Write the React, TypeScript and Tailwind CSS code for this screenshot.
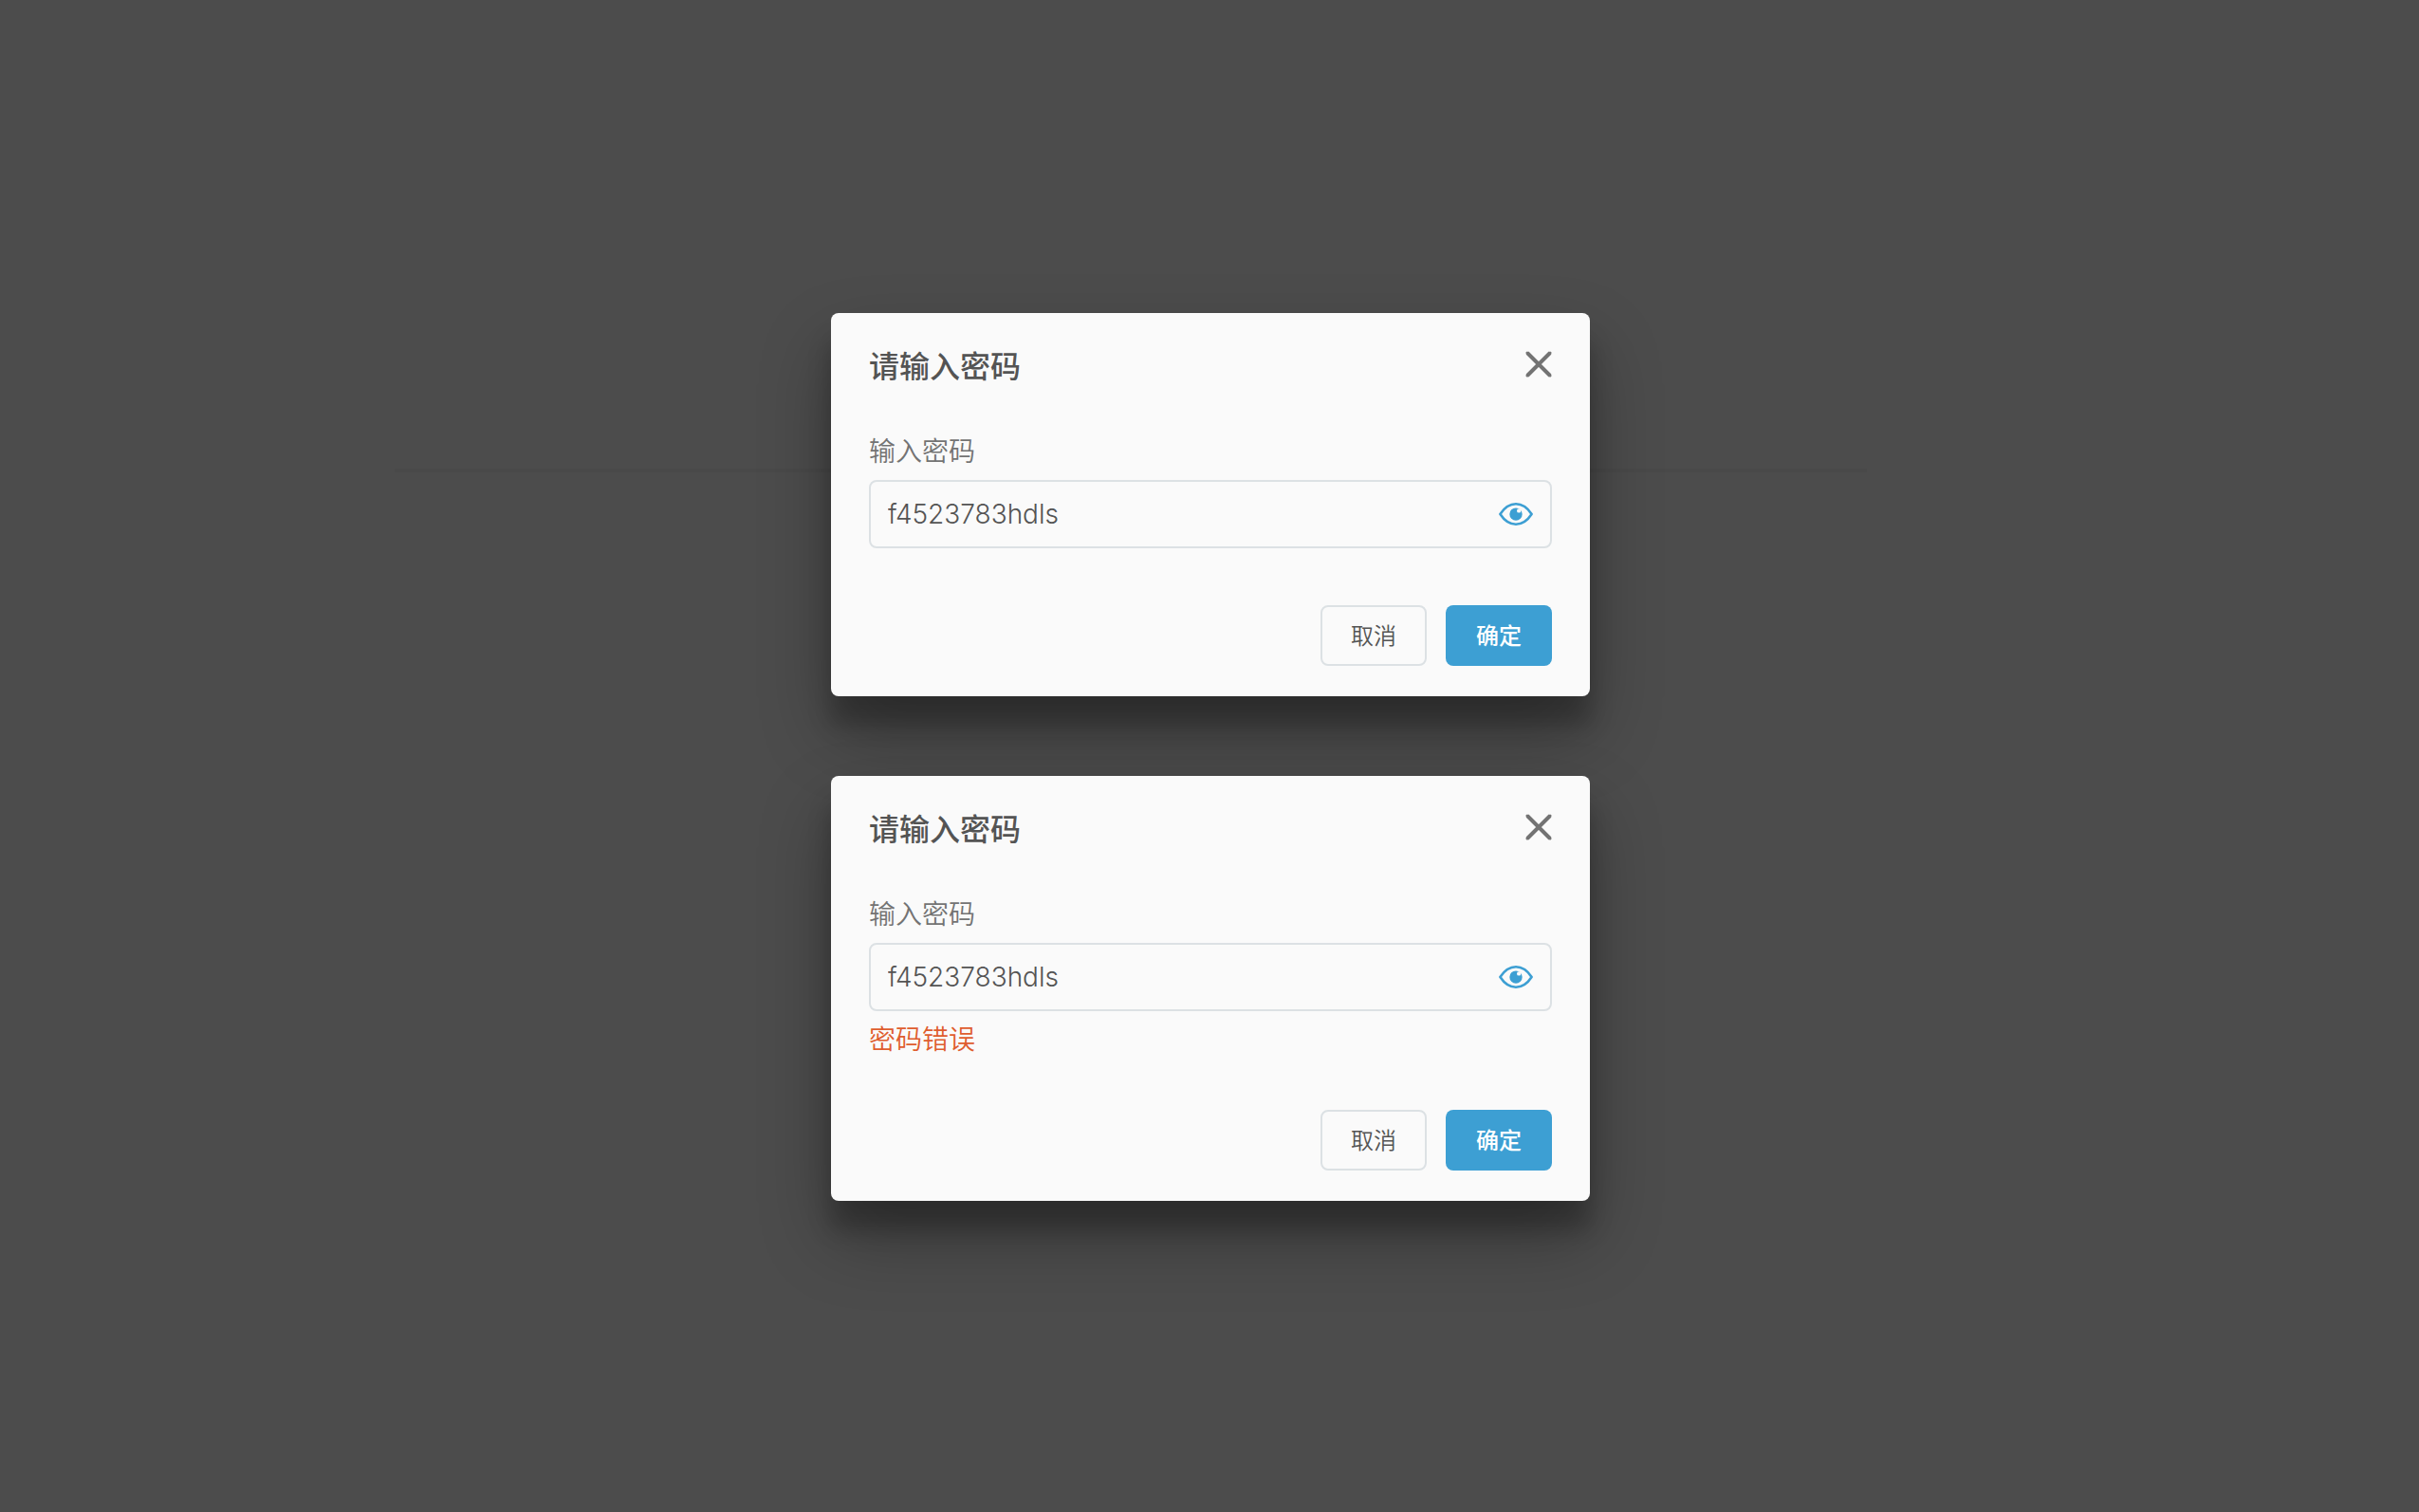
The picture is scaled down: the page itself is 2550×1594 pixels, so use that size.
import { useId, useState } from "react";

function CloseIcon() {
  return (
    <svg width="28" height="28" viewBox="0 0 28 28" fill="none" aria-hidden="true">
      <path d="M2 2L26 26M26 2L2 26" stroke="#737373" strokeWidth="4" strokeLinecap="butt" />
      <path d="M2 2L26 26M26 2L2 26" stroke="#737373" strokeWidth="3" strokeLinecap="round" />
    </svg>
  );
}

function EyeIcon() {
  return (
    <svg width="36" height="24" viewBox="0 0 36 24" fill="none" aria-hidden="true">
      <path
        d="M1.4 12C6 5 11.5 1.3 18 1.3S30 5 34.6 12C30 19 24.5 22.7 18 22.7S6 19 1.4 12Z"
        stroke="#3d9fd3"
        strokeWidth="2.6"
        strokeLinejoin="round"
      />
      <circle cx="18" cy="12.1" r="6.7" fill="#3d9fd3" />
      <circle cx="21.2" cy="8.4" r="2.2" fill="#fafafa" />
    </svg>
  );
}

function PasswordDialog({ error }: { error?: string }) {
  const id = useId();
  const [value, setValue] = useState("f4523783hdls");
  const [visible, setVisible] = useState(true);

  return (
    <section
      role="dialog"
      aria-labelledby={id + "-title"}
      className="relative w-full max-w-[800px] rounded-lg bg-[#fafafa] px-10 pt-[30px] pb-8 shadow-[0_38px_76px_rgba(0,0,0,0.3),0_30px_24px_rgba(0,0,0,0.22)]"
    >
      <header className="flex h-12 items-center justify-between">
        <h2 id={id + "-title"} className="text-[32px] leading-12 font-medium text-[#545454]">
          请输入密码
        </h2>
        <button type="button" aria-label="关闭">
          <CloseIcon />
        </button>
      </header>

      <form className="mt-11" onSubmit={(e) => e.preventDefault()}>
        <label htmlFor={id + "-input"} className="block text-[28px] leading-11 font-[350] text-[#737373]">
          输入密码
        </label>
        <div className="mt-2.5 flex h-18 items-center rounded-lg border-2 border-[#dce1e4] px-[18px]">
          <input
            id={id + "-input"}
            type={visible ? "text" : "password"}
            value={value}
            onChange={(e) => setValue(e.target.value)}
            className="min-w-0 flex-1 bg-transparent font-['Inter'] text-[28px] font-light text-[#545454] outline-none"
          />
          <button type="button" aria-label="显示密码" onClick={() => setVisible(!visible)}>
            <EyeIcon />
          </button>
        </div>
        {error && <p className="mt-1.5 text-[28px] leading-11 font-[350] text-[#df5d2e]">{error}</p>}
        <div className={error ? "mt-[54px] flex justify-end gap-5" : "mt-15 flex justify-end gap-5"}>
          <button type="button" className="h-16 w-28 rounded-lg border-2 border-[#dce1e4] pb-0.5 text-2xl font-[350] text-[#545454]">
            取消
          </button>
          <button type="submit" className="h-16 w-28 rounded-lg bg-[#3d9fd3] pb-0.5 text-2xl font-medium text-white">
            确定
          </button>
        </div>
      </form>
    </section>
  );
}

export default function App() {
  return (
    <main
      lang="zh-CN"
      className="relative flex min-h-screen flex-col items-center gap-[84px] bg-[#4c4c4c] pt-[330px] pb-20 pl-0.5 font-['Noto_Sans_CJK_SC',sans-serif]"
    >
      <hr className="absolute top-[494px] right-[582px] left-[416px] h-1 border-0 bg-[#494949]" />
      <PasswordDialog />
      <PasswordDialog error="密码错误" />
    </main>
  );
}
